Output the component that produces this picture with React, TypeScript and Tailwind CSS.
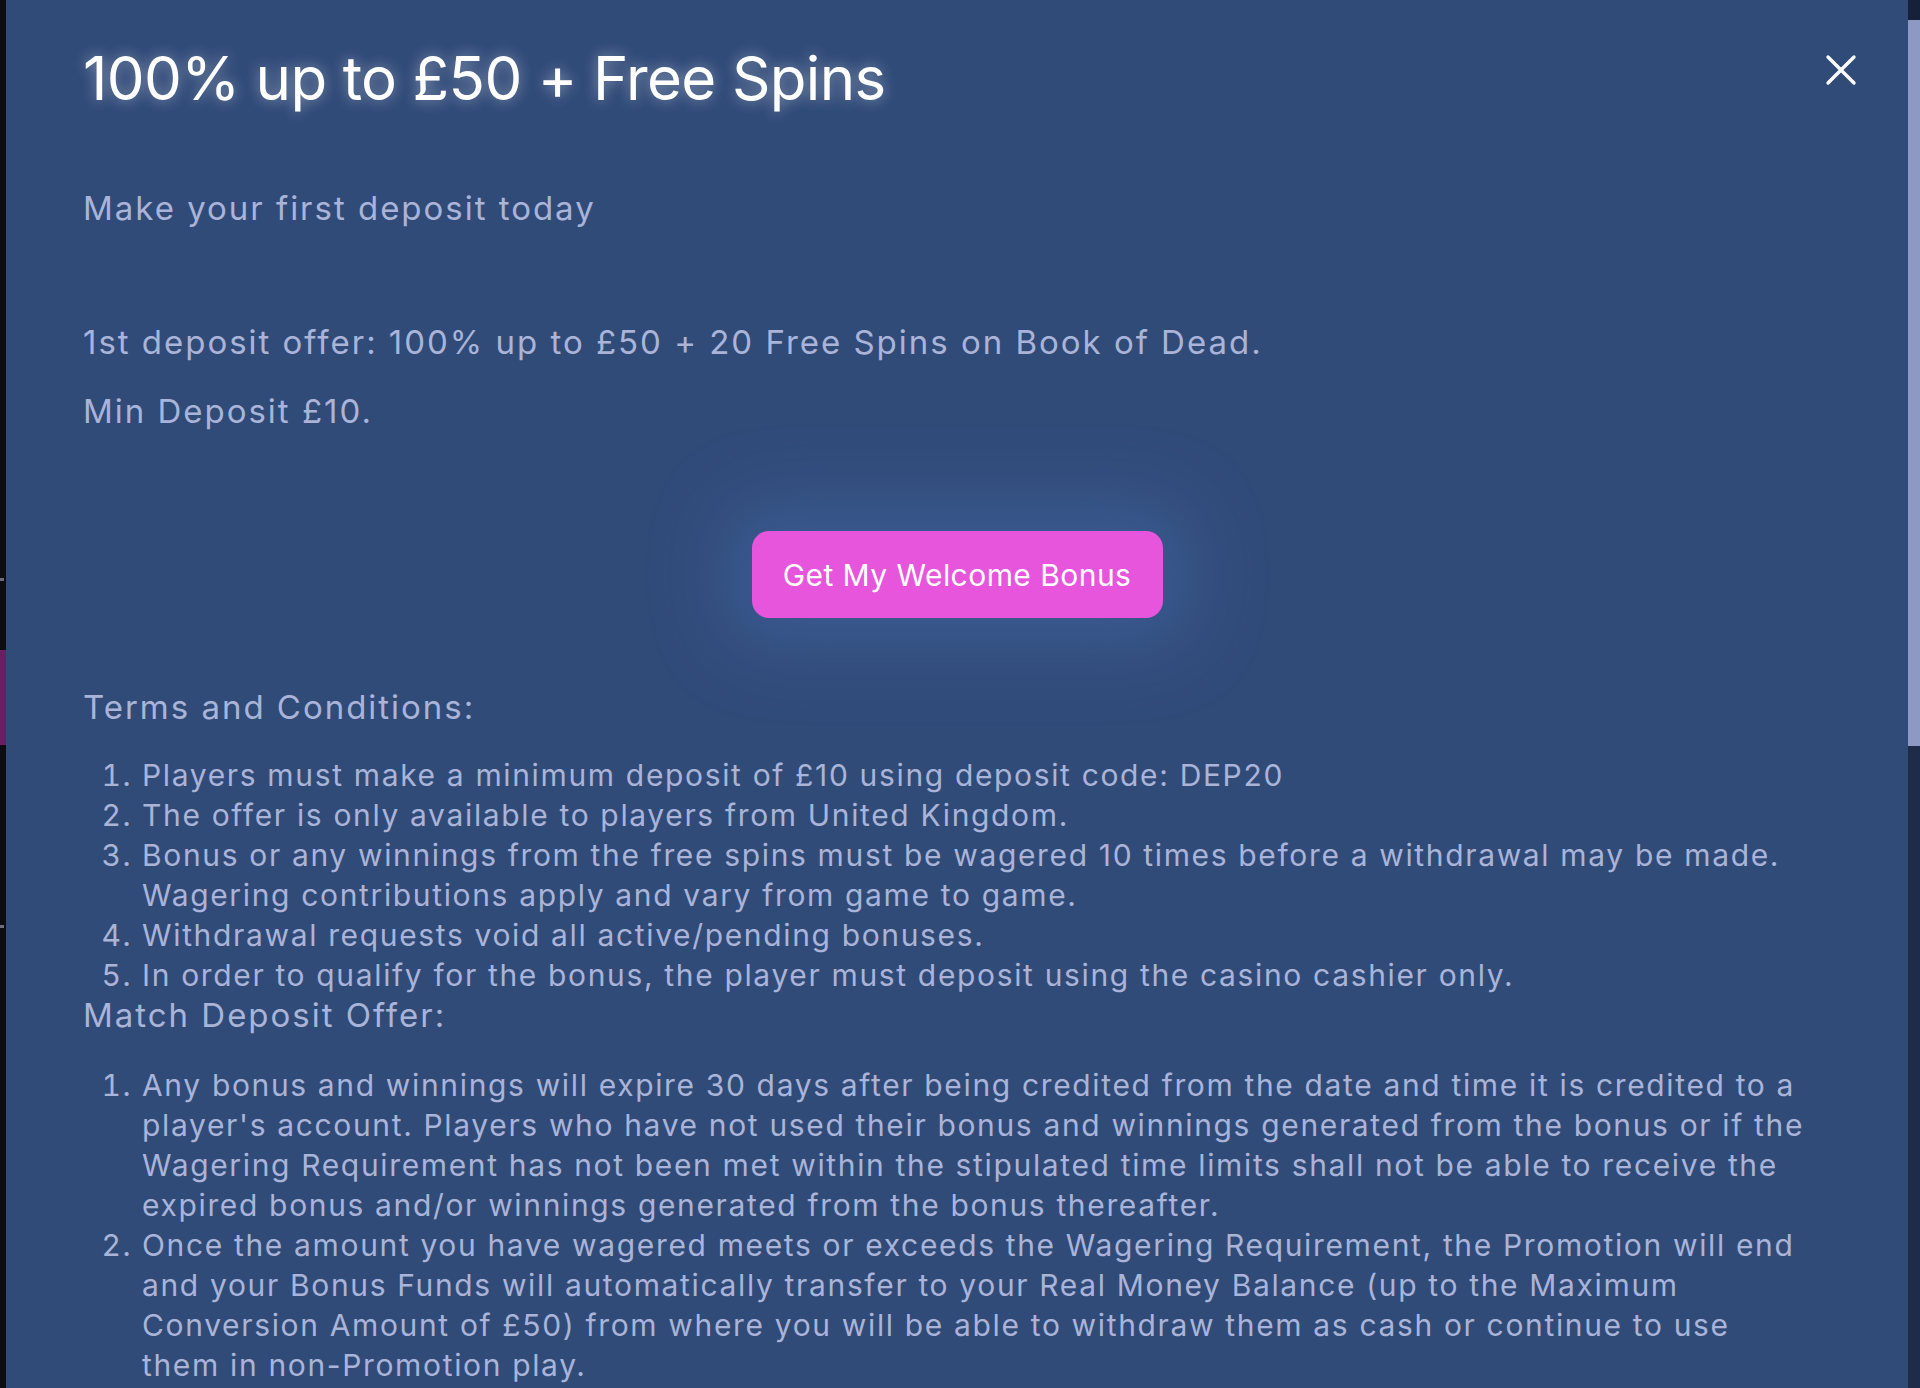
import React from "react";

// each item is split into the lines it shows in the reference
const termsItems = [
  ["Players must make a minimum deposit of £10 using deposit code: DEP20"],
  ["The offer is only available to players from United Kingdom."],
  [
    "Bonus or any winnings from the free spins must be wagered 10 times before a withdrawal may be made.",
    "Wagering contributions apply and vary from game to game.",
  ],
  ["Withdrawal requests void all active/pending bonuses."],
  ["In order to qualify for the bonus, the player must deposit using the casino cashier only."],
];

const matchItems = [
  [
    "Any bonus and winnings will expire 30 days after being credited from the date and time it is credited to a",
    "player's account. Players who have not used their bonus and winnings generated from the bonus or if the",
    "Wagering Requirement has not been met within the stipulated time limits shall not be able to receive the",
    "expired bonus and/or winnings generated from the bonus thereafter.",
  ],
  [
    "Once the amount you have wagered meets or exceeds the Wagering Requirement, the Promotion will end",
    "and your Bonus Funds will automatically transfer to your Real Money Balance (up to the Maximum",
    "Conversion Amount of £50) from where you will be able to withdraw them as cash or continue to use",
    "them in non-Promotion play.",
  ],
  ["Bonus offer is valid once per player, household and IP address."],
];

function CloseIcon() {
  return (
    <svg width="32" height="32" viewBox="0 0 32 32" fill="none">
      <path d="M3 3L29 29M29 3L3 29" stroke="white" strokeWidth="3.4" strokeLinecap="round" />
    </svg>
  );
}

function Item({ lines }: { lines: string[] }) {
  return (
    <li className="whitespace-nowrap">
      {lines.map((l, i) => (
        <React.Fragment key={i}>
          {i > 0 && <br />}
          {l}
        </React.Fragment>
      ))}
    </li>
  );
}

export default function App() {
  return (
    <div
      className="flex h-[1388px] w-full overflow-hidden bg-[#0c0d14]"
      style={{ fontFamily: "Inter, 'Noto Sans', sans-serif" }}
    >
      {/* page behind the modal */}
      <div className="flex w-[6px] shrink-0 flex-col">
        <div className="h-[578px]" />
        <div className="h-[3px] w-[4px] bg-[#6a6e7a]" />
        <div className="h-[69px]" />
        <div className="h-[95px] bg-[#6b1f62]" />
        <div className="h-[180px]" />
        <div className="h-[3px] w-[4px] bg-[#6a6e7a]" />
      </div>

      <div className="relative flex-1 overflow-hidden bg-[#314b79] px-[77px] pt-[42px] text-[33px] leading-[40px] tracking-[0.06em] text-[#a9b4d8]">
        <button type="button" className="absolute right-[51px] top-[54px]">
          <CloseIcon />
        </button>

        <h1 className="text-[60px] font-normal leading-[72px] tracking-[-0.011em] text-white [text-shadow:0_0_14px_rgba(255,255,255,0.45)]">
          100% up to £50 + Free Spins
        </h1>

        <p className="mt-[74px]">Make your first deposit today</p>
        <p className="mt-[94px]">1st deposit offer: 100% up to £50 + 20 Free Spins on Book of Dead.</p>
        <p className="mt-[29px]">Min Deposit £10.</p>

        <div className="mt-[100px] flex justify-center">
          <button
            type="button"
            className="h-[87px] w-[411px] rounded-[17px] bg-[#e655dc] text-[30px] tracking-[0.015em] text-white shadow-[0_0_70px_30px_rgba(70,108,172,0.45)]"
          >
            Get My Welcome Bonus
          </button>
        </div>

        <p className="mt-[69px]">Terms and Conditions:</p>
        <ol className="mt-[28px] list-decimal pl-[59px] text-[30px] tracking-[0.055em]">
          {termsItems.map((t) => (
            <Item key={t[0]} lines={t} />
          ))}
        </ol>

        <p>Match Deposit Offer:</p>
        <ol className="mt-[30px] list-decimal pl-[59px] text-[30px] tracking-[0.055em]">
          {matchItems.map((t) => (
            <Item key={t[0]} lines={t} />
          ))}
        </ol>
      </div>

      {/* scrollbar */}
      <div className="flex w-[12px] shrink-0 flex-col bg-[#1e2b49]">
        <div className="h-[20px] bg-[#16203a]" />
        <div className="h-[726px] bg-[#8d99c2]" />
      </div>
    </div>
  );
}
